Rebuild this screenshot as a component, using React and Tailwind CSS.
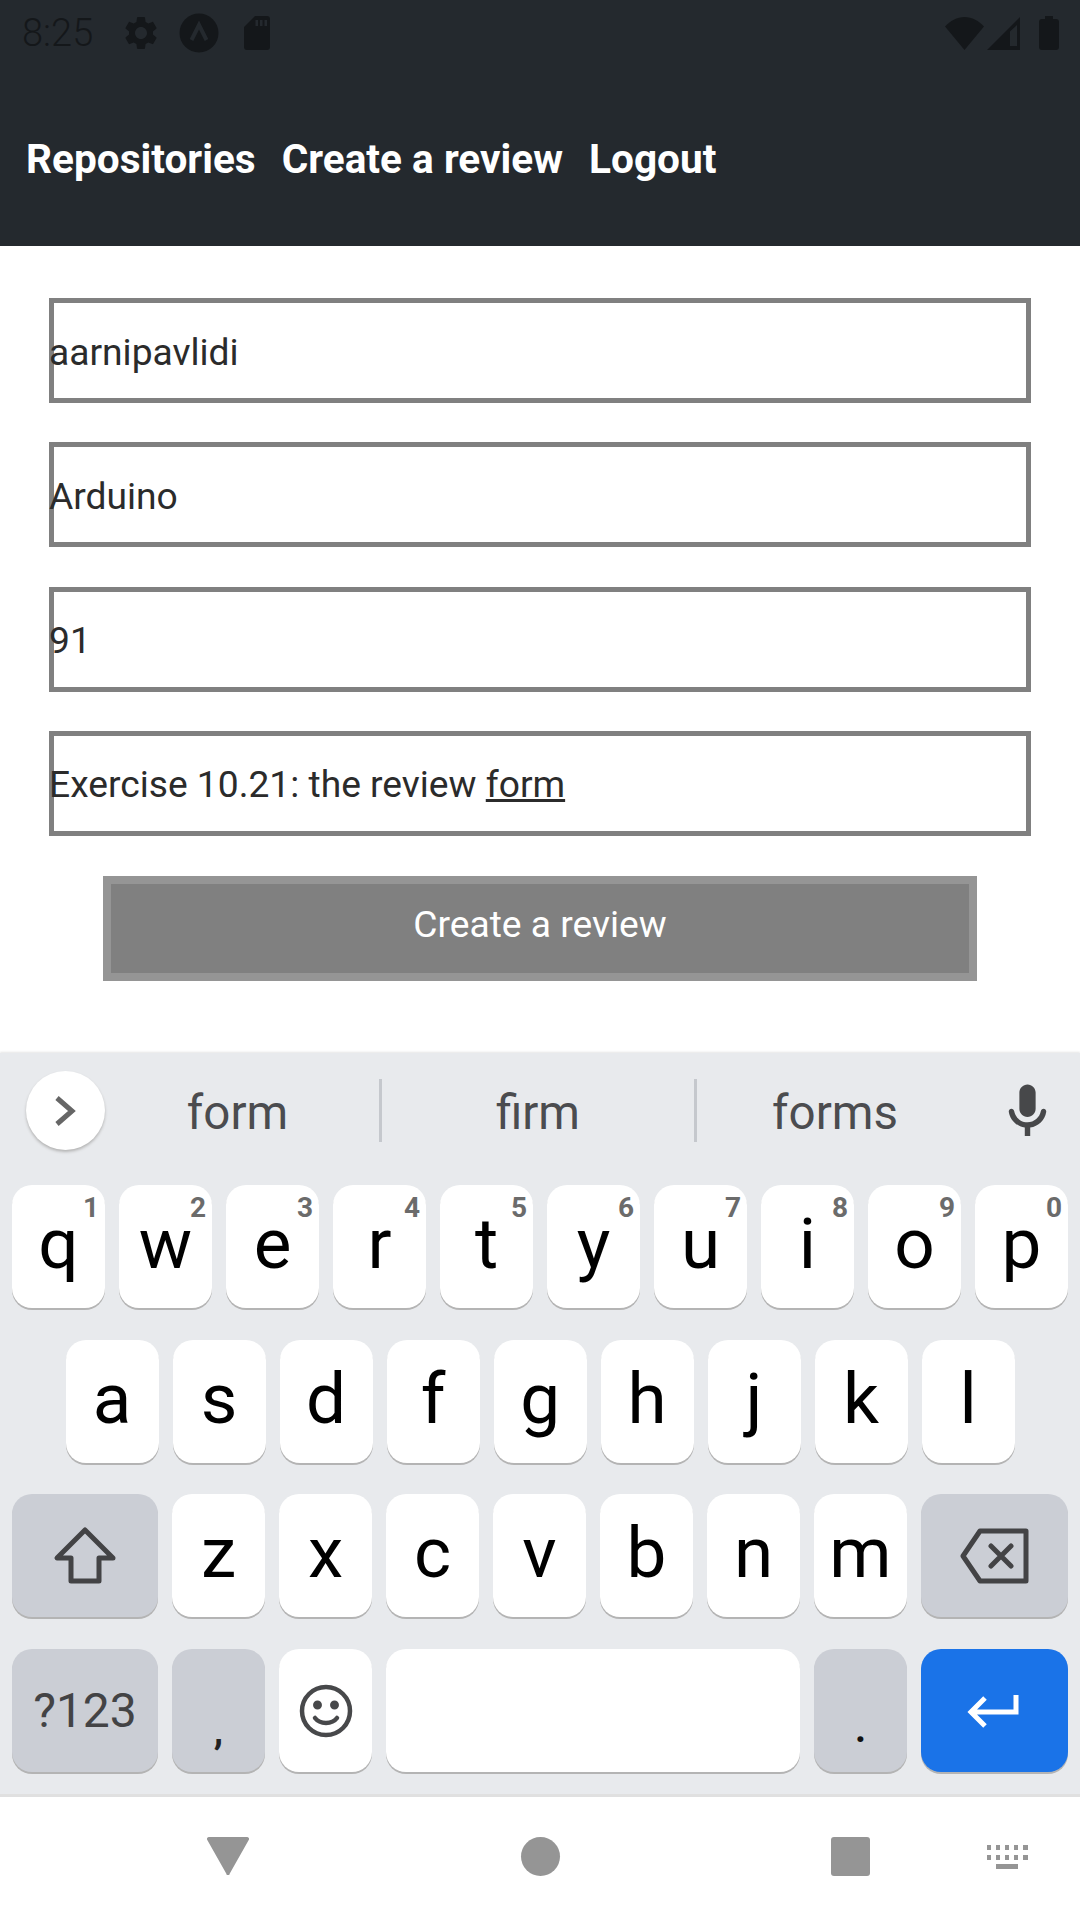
const roboto = "font-['Roboto',sans-serif]";

const fields = ["aarnipavlidi", "Arduino", "91"];

const row1 = [
  ["q", "1"],
  ["w", "2"],
  ["e", "3"],
  ["r", "4"],
  ["t", "5"],
  ["y", "6"],
  ["u", "7"],
  ["i", "8"],
  ["o", "9"],
  ["p", "0"],
];
const row2 = ["a", "s", "d", "f", "g", "h", "j", "k", "l"];
const row3 = ["z", "x", "c", "v", "b", "n", "m"];

function Key({ label, hint }) {
  return (
    <div className="relative flex h-[123px] w-[93px] items-center justify-center rounded-[20px] bg-white text-[71px] leading-none text-black shadow-[0_2px_0_#b4b4b4]">
      <span className="pb-[6px]">{label}</span>
      {hint && (
        <span className="absolute right-[6px] top-[6px] text-[28px] font-bold leading-[34px] text-[#6b6b6b]">
          {hint}
        </span>
      )}
    </div>
  );
}

function SideKey({ children, width = "w-[93px]", tone = "bg-[#cbced5]", align = "items-center" }) {
  return (
    <div className={`flex h-[123px] justify-center rounded-[20px] shadow-[0_2px_0_#b4b4b4] ${tone} ${align} ${width}`}>
      {children}
    </div>
  );
}

function StatusBar() {
  return (
    <div className="flex h-[64px] items-center pl-[22px] pr-[21px] text-[#14171a]">
      <span className="text-[38px] font-light leading-none">8:25</span>
      <svg className="ml-[28px] h-[40px] w-[40px]" viewBox="0 0 24 24" fill="currentColor">
        <path d="M19.14 12.94c.04-.3.06-.61.06-.94 0-.32-.02-.64-.07-.94l2.03-1.58c.18-.14.23-.41.12-.61l-1.92-3.32c-.12-.22-.37-.29-.59-.22l-2.39.96c-.5-.38-1.03-.7-1.62-.94l-.36-2.54c-.04-.24-.24-.41-.48-.41h-3.84c-.24 0-.43.17-.47.41l-.36 2.54c-.59.24-1.13.57-1.62.94l-2.39-.96c-.22-.08-.47 0-.59.22L2.74 8.87c-.12.21-.08.47.12.61l2.03 1.58c-.05.3-.09.63-.09.94s.02.64.07.94l-2.03 1.58c-.18.14-.23.41-.12.61l1.92 3.32c.12.22.37.29.59.22l2.39-.96c.5.38 1.03.7 1.62.94l.36 2.54c.05.24.24.41.48.41h3.84c.24 0 .44-.17.47-.41l.36-2.54c.59-.24 1.13-.56 1.62-.94l2.39.96c.22.08.47 0 .59-.22l1.92-3.32c.12-.22.07-.47-.12-.61l-2.01-1.58zM12 15.6c-1.98 0-3.6-1.62-3.6-3.6s1.62-3.6 3.6-3.6 3.6 1.62 3.6 3.6-1.62 3.6-3.6 3.6z" />
      </svg>
      <svg className="ml-[18px] h-[40px] w-[40px]" viewBox="0 0 40 40">
        <circle cx="20" cy="20" r="19.5" fill="currentColor" />
        <path d="M12.5 27 20 12l7.5 15" fill="none" stroke="#24292e" strokeWidth="4" />
      </svg>
      <svg className="ml-[25px] h-[34px] w-[26px]" viewBox="0 0 26 34" fill="currentColor">
        <path d="M11 0h12a3 3 0 0 1 3 3v28a3 3 0 0 1-3 3H3a3 3 0 0 1-3-3V11zM11.5 4v6h2.5V4zm4.5 0v6h2.5V4zm4.5 0v6H23V4z" fillRule="evenodd" />
      </svg>
      <svg className="ml-auto h-[33px] w-[39px]" viewBox="0 0 39 33" fill="currentColor">
        <path d="M0 9.5C5 4 12 0 19.5 0S34 4 39 9.5L19.5 33z" />
      </svg>
      <svg className="ml-[3px] h-[33px] w-[33px]" viewBox="0 0 33 33" fill="currentColor">
        <path d="M33 0v33H0zM30 8l-7 6.500V29h7z" fillRule="evenodd" />
        <path d="M24 15.500 29 9.500V28.500h-5z" fill="#24292e" opacity="0.55" />
      </svg>
      <svg className="ml-[19px] h-[34px] w-[20px]" viewBox="0 0 20 34" fill="currentColor">
        <path d="M6 0h8v3h3a3 3 0 0 1 3 3v25a3 3 0 0 1-3 3H3a3 3 0 0 1-3-3V6a3 3 0 0 1 3-3h3z" />
      </svg>
    </div>
  );
}

function Keyboard() {
  return (
    <div className="h-[741px] bg-[#e8eaed] shadow-[0_-1px_2px_#e5e5e5]">
      <div className="flex h-[115px] items-start pl-[26px] pt-[18px] text-[47.500px] leading-[84px] text-[#4b4c4f]">
        <div className="flex h-[79px] w-[79px] shrink-0 items-center justify-center rounded-full bg-white shadow-[0_2px_3px_#b4b4b4]">
          <svg className="h-[32px] w-[24px]" viewBox="0 0 24 32" fill="none" stroke="#666" strokeWidth="5">
            <path d="M3 3l15 13L3 29" />
          </svg>
        </div>
        <span className="w-[265px] shrink-0 text-center">form</span>
        <div className="ml-[9px] mt-[8px] h-[63px] w-[3px] shrink-0 bg-[#c5c8cd]" />
        <span className="w-[312px] shrink-0 text-center">firm</span>
        <div className="mt-[8px] h-[63px] w-[3px] shrink-0 bg-[#c5c8cd]" />
        <span className="w-[276px] shrink-0 text-center">forms</span>
        <svg className="ml-[22px] mt-[8px] h-[65px] w-[65px] shrink-0" viewBox="0 0 24 24" fill="#47484a">
          <path d="M12 14c1.66 0 3-1.34 3-3V5c0-1.66-1.34-3-3-3S9 3.34 9 5v6c0 1.66 1.34 3 3 3zm5.910-3c-.49 0-.9.36-.98.85C16.520 14.200 14.470 16 12 16s-4.520-1.800-4.930-4.150c-.08-.49-.49-.85-.98-.85-.61 0-1.090.54-1 1.140.49 3 2.890 5.350 5.910 5.780V21h2v-3.080c3.020-.43 5.420-2.780 5.910-5.780.1-.6-.39-1.140-1-1.140z" />
        </svg>
      </div>
      <div className="flex flex-col gap-[31.700px] px-[12px] pt-[17px]">
        <div className="flex gap-[14px]">
          {row1.map(([k, n]) => (
            <Key key={k} label={k} hint={n} />
          ))}
        </div>
        <div className="flex gap-[14px] pl-[53.600px]">
          {row2.map((k) => (
            <Key key={k} label={k} />
          ))}
        </div>
        <div className="flex gap-[14px]">
          <SideKey width="w-[146px]">
            <svg className="h-[60px] w-[64px]" viewBox="0 0 64 60" fill="none" stroke="#434345" strokeWidth="5" strokeLinejoin="round">
              <path d="M32 4 4 32h14v23h28V32h14z" />
            </svg>
          </SideKey>
          {row3.map((k) => (
            <Key key={k} label={k} />
          ))}
          <SideKey width="w-[147px]">
            <svg className="h-[56px] w-[70px]" viewBox="0 0 70 56" fill="none" stroke="#434345" strokeWidth="5" strokeLinejoin="round" strokeLinecap="round">
              <path d="M20 3h46v50H20L3 28zM31 18l20 20M51 18 31 38" />
            </svg>
          </SideKey>
        </div>
        <div className="flex gap-[14px]">
          <SideKey width="w-[146px]">
            <span className="text-[48px] leading-none text-[#434345]">?123</span>
          </SideKey>
          <SideKey align="items-end">
            <span className="pb-[22px] text-[38px] font-bold leading-none text-[#222]">,</span>
          </SideKey>
          <SideKey tone="bg-white">
            <svg className="h-[54px] w-[54px]" viewBox="0 0 54 54" fill="none" stroke="#47484a" strokeWidth="4.500" strokeLinecap="round">
              <circle cx="27" cy="27" r="24" />
              <path d="M16 34c5 6.500 17 6.500 22 0" />
              <circle cx="18.500" cy="21" r="2.200" fill="#47484a" />
              <circle cx="35.500" cy="21" r="2.200" fill="#47484a" />
            </svg>
          </SideKey>
          <div className="h-[123px] w-[414px] rounded-[20px] bg-white shadow-[0_2px_0_#b4b4b4]" />
          <SideKey align="items-end">
            <span className="pb-[24px] text-[38px] font-bold leading-none text-[#111]">.</span>
          </SideKey>
          <SideKey width="w-[147px]" tone="bg-[#1a73e8]">
            <svg className="mr-[4px] h-[34px] w-[52px]" viewBox="0 0 52 34" fill="none" stroke="#fff" strokeWidth="5">
              <path d="M49 1v17H5M18 4 4 18l14 14" />
            </svg>
          </SideKey>
        </div>
      </div>
    </div>
  );
}

function NavBar() {
  return (
    <div className="relative z-10 h-[126px] border-t-[3px] border-[#e0e0e0] bg-white">
      <div className="flex h-[118px] items-center pl-[207px] text-[#959595]">
        <svg className="h-[38px] w-[42px]" viewBox="0 0 42 38" fill="currentColor">
          <path d="M2 0h38a2 2 0 0 1 2 2.500L22.500 37a1.500 1.500 0 0 1-3 0L0 2.500A2 2 0 0 1 2 0z" />
        </svg>
        <div className="ml-[272px] h-[39px] w-[39px] rounded-full bg-current" />
        <div className="ml-[271px] h-[39px] w-[39px] rounded-[3px] bg-current" />
        <svg className="ml-[117px] mt-[2px] h-[24px] w-[41px]" viewBox="0 0 41 24" fill="currentColor">
          <path d="M0 0h4v5H0zm9 0h4v5H9zm9 0h4v5h-4zm9 0h4v5h-4zm9 0h5v5h-5zM0 10h4v5H0zm9 0h4v5H9zm9 0h4v5h-4zm9 0h4v5h-4zm9 0h5v5h-5zM9 19h22v5H9z" />
        </svg>
      </div>
    </div>
  );
}

export default function App() {
  return (
    <div className={`flex h-[1920px] w-[1080px] flex-col overflow-hidden bg-white ${roboto}`}>
      <header className="h-[246px] bg-[#24292e] pt-[1px]">
        <StatusBar />
        <nav className="mt-[72px] flex gap-[26px] pl-[26px] text-[40.600px] font-bold leading-[44px] text-white">
          <span>Repositories</span>
          <span>Create a review</span>
          <span>Logout</span>
        </nav>
      </header>

      <main className="flex h-[807px] flex-col gap-[39.300px] px-[49px] pt-[52px] text-[37.200px] text-[#2b2b2b]">
        {fields.map((value) => (
          <div key={value} className="flex h-[105px] items-center border-[5px] border-[#808080] pt-[4px]">
            <span className="-ml-[5px]">{value}</span>
          </div>
        ))}
        <div className="flex h-[105px] items-center border-[5px] border-[#808080] pt-[4px]">
          <span className="-ml-[5px]">
            Exercise 10.21: the review <span className="underline">form</span>
          </span>
        </div>
        <div className="mx-[54px] mt-[1px] flex h-[105px] items-center justify-center border-[8px] border-[#959595] bg-[#808080] pb-[7px] text-white">
          Create a review
        </div>
      </main>

      <Keyboard />
      <NavBar />
    </div>
  );
}
